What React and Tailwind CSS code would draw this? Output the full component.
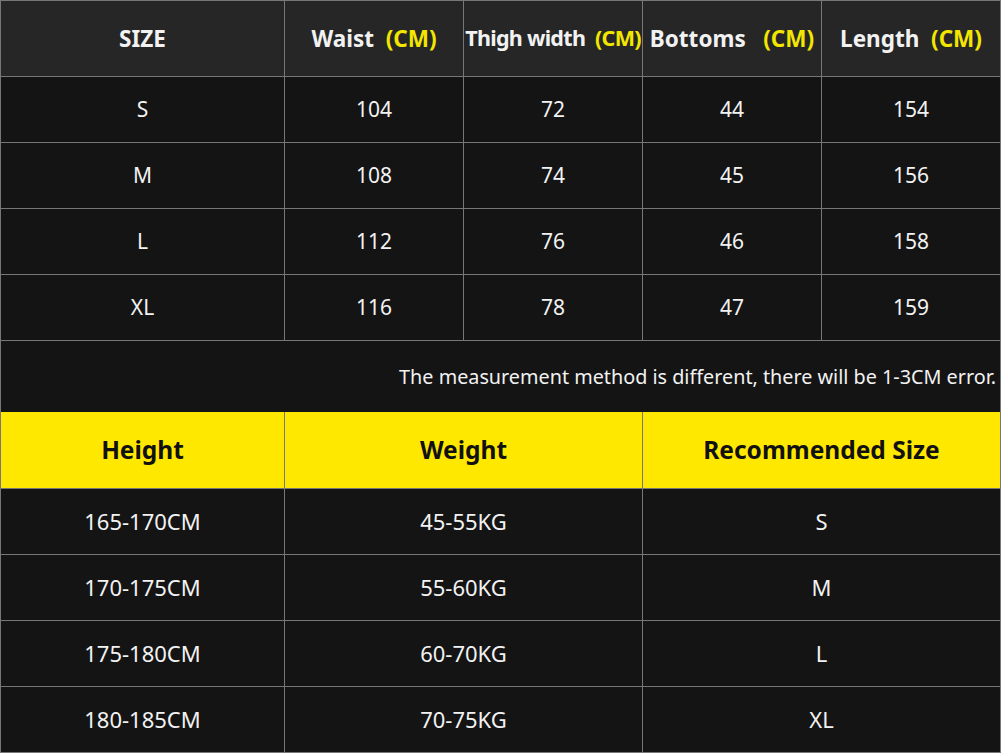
const sizes = [
  ['S', 104, 72, 44, 154],
  ['M', 108, 74, 45, 156],
  ['L', 112, 76, 46, 158],
  ['XL', 116, 78, 47, 159],
];

const recs = [
  ['165-170CM', '45-55KG', 'S'],
  ['170-175CM', '55-60KG', 'M'],
  ['175-180CM', '60-70KG', 'L'],
  ['180-185CM', '70-75KG', 'XL'],
];

const font = { fontFamily: '"Noto Sans", "Open Sans", sans-serif' };

export default function App() {
  return (
    <div className="w-[1001px] h-[753px] bg-[#777777] p-px flex flex-col gap-px text-[#f2f2f2]" style={font}>
      {/* size chart */}
      <div className="grid grid-cols-[283px_178px_178px_178px_178px] grid-rows-[75px_65px_65px_65px_65px] gap-px">
        <div className="bg-[#262626] flex items-center justify-center text-[22.5px] font-bold">SIZE</div>
        <div className="bg-[#262626] flex items-center justify-center text-[22.5px] font-bold whitespace-pre">
          <span>Waist  <span className="text-[#f3e600]">(CM)</span></span>
        </div>
        <div className="bg-[#262626] flex items-center justify-center text-[21.5px] font-bold whitespace-pre tracking-[-0.7px] overflow-visible">
          <span>Thigh width  <span className="text-[#f3e600]">(CM)</span></span>
        </div>
        <div className="bg-[#262626] flex items-center justify-center text-[22.5px] font-bold whitespace-pre">
          <span>Bottoms   <span className="text-[#f3e600]">(CM)</span></span>
        </div>
        <div className="bg-[#262626] flex items-center justify-center text-[22.5px] font-bold whitespace-pre">
          <span>Length  <span className="text-[#f3e600]">(CM)</span></span>
        </div>
        {sizes.map(r => r.map((v, i) => (
          <div key={r[0] + i} className="bg-[#141414] flex items-center justify-center text-[21px]">{v}</div>
        )))}
      </div>

      <div className="flex flex-col">
        <div className="h-[71px] bg-[#141414] flex items-center justify-end pr-[4px] text-[19.8px]">
          The measurement method is different, there will be 1-3CM error.
        </div>
        <div className="grid grid-cols-[283px_357px_357px] h-[76px] gap-px text-[24.5px] font-bold text-[#111111]">
          <div className="bg-[#ffe800] flex items-center justify-center">Height</div>
          <div className="bg-[#ffe800] flex items-center justify-center">Weight</div>
          <div className="bg-[#ffe800] flex items-center justify-center">Recommended Size</div>
        </div>
      </div>

      {/* recommendation */}
      <div className="grid grid-cols-[283px_357px_357px] grid-rows-[65px_65px_65px_65px] gap-px">
        {recs.map(r => r.map((v, i) => (
          <div key={r[0] + i} className="bg-[#141414] flex items-center justify-center text-[22px]">{v}</div>
        )))}
      </div>
    </div>
  );
}
